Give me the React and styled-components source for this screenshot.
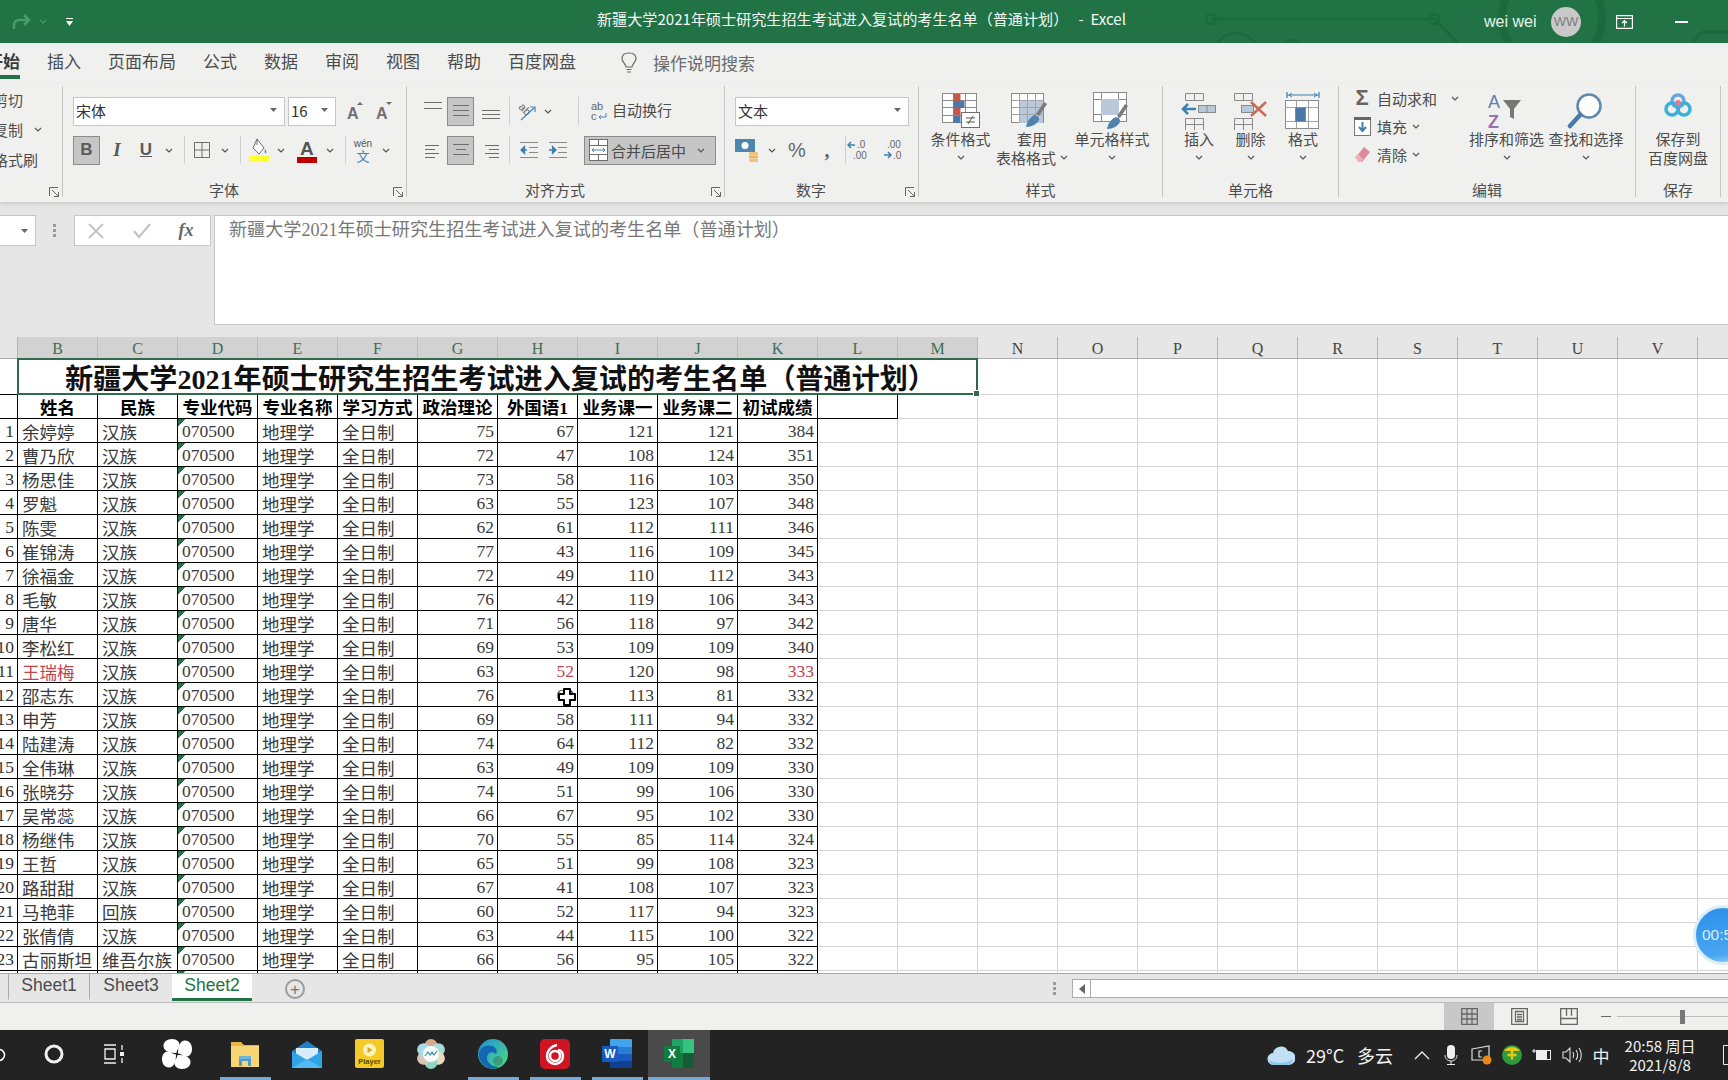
import React from 'react';
import styled, { createGlobalStyle } from 'styled-components';

const SANS = '"Noto Sans CJK SC", "Liberation Sans", sans-serif';
const SHEET = '"Liberation Serif", "Noto Sans CJK SC", serif';

const GlobalStyle = createGlobalStyle`
  html, body { margin: 0; padding: 0; background: #fff; }
  * { box-sizing: border-box; }
`;

const Page = styled.div`
  width: 1728px;
  height: 1080px;
  overflow: hidden;
  display: flex;
  flex-direction: column;
  position: relative;
  font-family: ${SANS};
  color: #444;
`;

/* ---------- title bar ---------- */
const TitleBar = styled.div`
  height: 43px;
  flex: none;
  background: #217346;
  display: flex;
  align-items: center;
  position: relative;
  color: #fff;
`;
const Circuit = styled.svg`
  position: absolute;
  left: 0;
  top: 0;
`;
const Quick = styled.div`
  width: 597px;
  flex: none;
  display: flex;
  align-items: center;
  padding-left: 12px;
  position: relative;
`;
const DocTitle = styled.div`
  font-size: 15.1px;
  white-space: pre;
  position: relative;
  margin-top: -8px;
  color: #f4f8f5;
`;
const TitleRight = styled.div`
  margin-left: auto;
  width: 244px;
  display: flex;
  align-items: center;
  position: relative;
`;
const UserName = styled.div`
  width: 54px;
  font-size: 16px;
  font-family: "Liberation Sans", sans-serif;
  white-space: nowrap;
  color: #e6f3ea;
`;
const Avatar = styled.div`
  width: 30px;
  height: 30px;
  margin-left: 13px;
  border-radius: 50%;
  background: #c9c9c9;
  color: #7c7c7c;
  font: 13px "Liberation Sans", sans-serif;
  display: flex;
  align-items: center;
  justify-content: center;
`;

/* ---------- tabs ---------- */
const TabsRow = styled.div`
  height: 41px;
  flex: none;
  background: #f0f1ef;
  display: flex;
  gap: 27px;
  margin-left: -14px;
`;
const Tab = styled.div`
  height: 36px;
  padding-top: 7px;
  line-height: 22px;
  font-size: 17px;
  white-space: nowrap;
  color: ${p => (p.$active ? '#3a3a3a' : '#4c4c4c')};
  font-weight: ${p => (p.$active ? 700 : 400)};
  border-bottom: 4px solid ${p => (p.$active ? '#217346' : 'transparent')};
`;
const TellMe = styled.div`
  display: flex;
  align-items: center;
  height: 36px;
  padding-top: 3px;
  margin-left: 18px;
  gap: 16px;
  font-size: 17px;
  color: #6a6a6a;
`;

/* ---------- ribbon ---------- */
const Ribbon = styled.div`
  height: 118px;
  flex: none;
  background: #f0f1ef;
  display: flex;
  padding-top: 2px;
  position: relative;
  box-shadow: 0 2px 4px rgba(0, 0, 0, 0.12);
`;
const Group = styled.div`
  width: ${p => p.$w}px;
  height: 111px;
  flex: none;
  display: flex;
  flex-direction: column;
  border-right: 1px solid #c4c4c4;
`;
const GroupBody = styled.div`
  height: 90px;
  flex: none;
  display: flex;
  flex-direction: ${p => (p.$stack ? 'column' : 'row')};
  padding-top: ${p => (p.$stack ? 11 : 0)}px;
  padding-left: ${p => p.$pl || 0}px;
  gap: ${p => (p.$stack ? 11 : 0)}px;
`;
const GroupFoot = styled.div`
  display: grid;
  grid-template-columns: 1fr auto 1fr;
  align-items: center;
  flex: none;
  height: 20px;
  margin-top: 4px;
  font-size: 15px;
  line-height: 20px;
  color: #4c4c4c;
  & > span { grid-column: 2; margin-right: ${p => (p.$shift ? 21 : 0)}px; }
  & > svg { justify-self: end; margin: 4px 3px 0 0; }
`;
const Row = styled.div`
  display: flex;
  align-items: center;
  height: ${p => p.$h || 28}px;
`;
const Slot = styled.div`
  width: ${p => p.$w}px;
  height: 100%;
  flex: none;
  display: flex;
  align-items: center;
  justify-content: center;
`;
const ToggleBtn = styled.div`
  width: 27px;
  height: 29px;
  flex: none;
  background: #c6c6c6;
  border: 1px solid #8c8c8c;
  display: flex;
  align-items: center;
  justify-content: center;
`;
const StyleLetter = styled.span`
  font: ${p => (p.$i ? 'italic 700 19px "Liberation Serif", serif' : '700 17px "Liberation Sans", sans-serif')};
  color: #5a5a5a;
  text-decoration: ${p => (p.$u ? 'underline' : 'none')};
`;
const Sep = styled.div`
  width: 1px;
  height: 28px;
  flex: none;
  background: #cfcfcf;
  margin-left: ${p => p.$l || 0}px;
  margin-right: ${p => p.$r || 0}px;
`;
const Select = styled.div`
  width: ${p => p.$w}px;
  height: 29px;
  flex: none;
  margin-left: ${p => p.$ml || 0}px;
  background: #fff;
  border: 1px solid #c6c6c6;
  display: flex;
  align-items: center;
  justify-content: space-between;
  padding: 0 7px 2px 2px;
  font-size: 15px;
  color: #333;
`;
const RowLabel = styled.span`
  font-size: 15px;
  white-space: nowrap;
  margin-left: ${p => p.$ml || 0}px;
  padding-bottom: 3px;
  color: #4c4c4c;
`;
const MergeBtn = styled.div`
  width: 132px;
  height: 29px;
  flex: none;
  margin-left: 14px;
  background: #c6c6c6;
  border: 1px solid #8c8c8c;
  display: flex;
  align-items: center;
  padding-left: 4px;
  gap: 3px;
  font-size: 15px;
  color: #4a4a4a;
  white-space: nowrap;
  & > svg { flex: none; }
`;
const Clip = styled.div`
  display: flex;
  flex-direction: column;
  margin: -2px 0 0 -7px;
`;
const ClipRow = styled.div`
  height: 30px;
  display: flex;
  align-items: center;
  gap: 11px;
  font-size: 15px;
  white-space: nowrap;
  color: #4c4c4c;
`;
const BigBtn = styled.div`
  width: ${p => p.$w}px;
  flex: none;
  display: flex;
  flex-direction: column;
  align-items: center;
  padding-top: 6px;
  font-size: 15px;
  color: #4c4c4c;
`;
const BigIcon = styled.div`
  height: 37px;
  display: flex;
  align-items: flex-start;
  justify-content: center;
`;
const BigLine = styled.div`
  height: 19px;
  line-height: 19px;
  display: flex;
  align-items: center;
  gap: 4px;
  white-space: nowrap;
`;
const SmallCol = styled.div`
  width: 116px;
  flex: none;
  display: flex;
  flex-direction: column;
  margin-top: -2px;
`;
const SmallRow = styled.div`
  height: 28px;
  display: flex;
  align-items: center;
  gap: 5px;
  font-size: 15px;
  color: #4c4c4c;
  white-space: nowrap;
`;
const SmallIcon = styled.div`
  width: 20px;
  flex: none;
  display: flex;
  justify-content: center;
`;
const WenStack = styled.div`
  display: flex;
  flex-direction: column;
  align-items: center;
  line-height: 10px;
  & > small { font: 10px "Liberation Sans", sans-serif; color: #555; }
  & > b { font-weight: 400; font-size: 13px; line-height: 13px; color: #4b82ad; }
`;
const Mark = styled.span`
  font: ${p => p.$font || '400 20px "Liberation Sans", sans-serif'};
  line-height: 1;
  color: #666;
`;

/* ---------- formula bar ---------- */
const FormulaBar = styled.div`
  height: 135px;
  flex: none;
  background: #e6e6e6;
  display: flex;
  align-items: flex-start;
  padding-top: 13px;
`;
const NameBox = styled.div`
  width: 36px;
  height: 31px;
  flex: none;
  background: #fff;
  border: 1px solid #c6c6c6;
  border-left: 0;
  display: flex;
  align-items: center;
  justify-content: flex-end;
  padding-right: 7px;
`;
const GripSlot = styled.div`
  width: 38px;
  height: 31px;
  flex: none;
  display: flex;
  align-items: center;
  justify-content: center;
`;
const FxBox = styled.div`
  width: 137px;
  height: 31px;
  flex: none;
  background: #fff;
  border: 1px solid #c6c6c6;
  display: flex;
  align-items: center;
`;
const FxMark = styled.span`
  font: italic 700 18px "Liberation Serif", serif;
  color: #666;
`;
const FormulaInput = styled.div`
  flex: 1;
  height: 110px;
  margin-left: 3px;
  background: #fff;
  border: 1px solid #c6c6c6;
  border-right: 0;
  padding: 2px 0 0 14px;
  font-family: ${SHEET};
  font-size: 18.1px;
  line-height: 24px;
  color: #777;
  white-space: nowrap;
`;

/* ---------- sheet ---------- */
const Sheet = styled.div`
  height: 636px;
  flex: none;
  overflow: hidden;
  display: grid;
  grid-template-columns: 18px repeat(22, 80px);
  grid-template-rows: 22px 36px repeat(25, 24px);
  font-family: ${SHEET};
  font-size: 17.5px;
  background: #fff;
`;
const Corner = styled.div`
  background: #e6e6e6;
  border-right: 1px solid #b4b4b4;
  border-bottom: 1px solid #ababab;
`;
const ColHead = styled.div`
  background: ${p => (p.$on ? '#d2d2d2' : '#e6e6e6')};
  color: ${p => (p.$on ? '#3d6e52' : '#444')};
  border-right: 1px solid ${p => (p.$on ? '#bcbcbc' : '#b4b4b4')};
  border-bottom: 1px solid #ababab;
  display: flex;
  align-items: center;
  justify-content: center;
  padding-top: 3px;
  font-size: 16px;
`;
const RowHead = styled.div`
  background: #fff;
  border-right: 1px solid #000;
  border-bottom: 1px solid #000;
  display: flex;
  align-items: center;
  justify-content: flex-end;
  padding: 1px 3px 0 0;
  overflow: hidden;
  white-space: nowrap;
  color: #333;
`;
const Banner = styled.div`
  grid-column: span 12;
  position: relative;
  z-index: 2;
  border: 2px solid #2f6b4a;
  margin-left: -1px;
  margin-top: -1px;
  display: flex;
  align-items: center;
  justify-content: center;
  padding-left: 6px;
  font-size: 28.1px;
  font-weight: 700;
  color: #111;
  white-space: nowrap;
`;
const Handle = styled.span`
  position: absolute;
  right: -4px;
  bottom: -4px;
  width: 7px;
  height: 7px;
  background: #2f6b4a;
  border: 1px solid #fff;
`;
const Blank = styled.div`
  border-right: 1px solid #d4d4d4;
  border-bottom: 1px solid #d4d4d4;
`;
const Head = styled.div`
  border-right: 1px solid #000;
  border-bottom: 1px solid #000;
  display: flex;
  align-items: center;
  justify-content: center;
  font-weight: 700;
  color: #000;
  white-space: nowrap;
  overflow: hidden;
`;
const Cell = styled.div`
  border-right: 1px solid #000;
  border-bottom: 1px solid #000;
  display: flex;
  align-items: center;
  justify-content: ${p => (p.$num ? 'flex-end' : 'flex-start')};
  padding: 1px 3px 0 4px;
  position: relative;
  white-space: nowrap;
  overflow: hidden;
  color: ${p => (p.$red ? '#c0444b' : '#3a3a3a')};
  background: ${p => (p.$tick ? 'linear-gradient(135deg, #217346 5px, transparent 5px)' : 'none')};
`;
const CrossCursor = styled.svg`
  position: absolute;
  left: 60px;
  top: 5px;
`;
const Timer = styled.div`
  position: absolute;
  left: 1693px;
  top: 905px;
  width: 60px;
  height: 60px;
  border-radius: 50%;
  border: 3px solid #dcedf3;
  background: linear-gradient(170deg, #2b8fe9, #4aa6f2 80%, #9ad2f7);
  color: #d8effc;
  font: 15.5px "Liberation Sans", sans-serif;
  display: flex;
  align-items: center;
  padding-left: 6px;
  white-space: nowrap;
  overflow: hidden;
`;

/* ---------- sheet tabs + status ---------- */
const SheetBar = styled.div`
  height: 30px;
  flex: none;
  background: #e6e6e6;
  display: flex;
  border-top: 1px solid #a9a9a9;
  border-bottom: 1px solid #bdbdbd;
  padding-left: 8px;
  font-family: "Liberation Sans", sans-serif;
`;
const SheetTab = styled.div`
  width: ${p => p.$w}px;
  height: 27px;
  flex: none;
  display: flex;
  align-items: center;
  justify-content: center;
  font-size: 17.5px;
  padding-bottom: 2px;
  color: ${p => (p.$active ? '#217346' : '#4c4c4c')};
  background: ${p => (p.$active ? '#fff' : 'transparent')};
  border-bottom: 3px solid ${p => (p.$active ? '#217346' : 'transparent')};
  border-left: ${p => (p.$active ? '0' : '1px solid #ababab')};
`;
const AddSheet = styled.div`
  width: 20px;
  height: 20px;
  margin: 5px 0 0 33px;
  border-radius: 50%;
  border: 2px solid #9a9a9a;
  color: #777;
  display: flex;
  align-items: center;
  justify-content: center;
  font-size: 17px;
  line-height: 1;
`;
const Fill = styled.div`
  flex: 1;
`;
const ScrollArea = styled.div`
  width: 678px;
  flex: none;
  display: flex;
  align-items: flex-start;
  padding-top: 5px;
`;
const ScrollGrip = styled.div`
  width: 22px;
  height: 19px;
  flex: none;
  display: flex;
  align-items: center;
  padding-left: 3px;
`;
const ScrollArrow = styled.div`
  width: 19px;
  height: 19px;
  flex: none;
  background: #fff;
  border: 1px solid #ababab;
  display: flex;
  align-items: center;
  justify-content: center;
`;
const ScrollTrack = styled.div`
  flex: 1;
  height: 19px;
  background: #fff;
  border: 1px solid #ababab;
  border-left: 0;
  border-right: 0;
`;
const StatusBar = styled.div`
  height: 27px;
  flex: none;
  background: #f0f1ef;
  display: flex;
`;
const ViewBtn = styled.div`
  width: 50px;
  flex: none;
  display: flex;
  align-items: center;
  justify-content: center;
  background: ${p => (p.$active ? '#c8c8c8' : 'transparent')};
`;
const ZoomBar = styled.div`
  width: 134px;
  flex: none;
  display: flex;
  align-items: center;
  padding-left: 7px;
`;
const ZoomMinus = styled.div`
  width: 10px;
  height: 1px;
  flex: none;
  margin-right: 6px;
  background: #666;
`;
const ZoomLine = styled.div`
  height: 1px;
  background: #bbb;
  flex: ${p => (p.$w ? `0 0 ${p.$w}px` : 1)};
`;
const ZoomThumb = styled.div`
  width: 5px;
  height: 14px;
  flex: none;
  background: #777;
`;

/* ---------- taskbar ---------- */
const Taskbar = styled.div`
  height: 50px;
  flex: none;
  background: #232323;
  display: flex;
  color: #fff;
`;
const StartClip = styled.div`
  width: 24px;
  flex: none;
  display: flex;
  align-items: center;
  margin-left: -8px;
  margin-right: 8px;
`;
const TaskItem = styled.div`
  width: ${p => p.$w || 62}px;
  margin-left: ${p => p.$ml || 0}px;
  flex: none;
  display: flex;
  flex-direction: column;
  align-items: center;
  background: ${p => (p.$active ? '#4a4a4a' : 'transparent')};
`;
const TaskIcon = styled.div`
  height: 47px;
  display: flex;
  align-items: center;
  justify-content: center;
`;
const TaskMark = styled.div`
  height: 3px;
  width: ${p => (p.$full ? '100%' : '51px')};
  background: ${p => (p.$on ? '#76a9d6' : 'transparent')};
`;
const Tray = styled.div`
  width: 466px;
  flex: none;
  display: flex;
  align-items: center;
`;
const TrayText = styled.div`
  width: ${p => p.$w}px;
  margin-left: ${p => p.$ml || 0}px;
  flex: none;
  font-size: ${p => p.$size || 18}px;
  text-align: ${p => (p.$center ? 'center' : 'left')};
  white-space: nowrap;
  color: #f2f2f2;
`;
const TraySlot = styled.div`
  width: ${p => p.$w}px;
  margin-left: ${p => p.$ml || 0}px;
  flex: none;
  display: flex;
  align-items: center;
  justify-content: center;
`;
const Clock = styled.div`
  width: 76px;
  margin-left: 7px;
  flex: none;
  text-align: center;
  font-size: 15px;
  line-height: 19px;
  white-space: nowrap;
  color: #f2f2f2;
`;

/* ---------- icons ---------- */
const Chev = ({ c = '#555' }) => (
  <svg width="8" height="5" viewBox="0 0 8 5"><polyline points="1,1 4,4 7,1" fill="none" stroke={c} strokeWidth="1.2" /></svg>
);
const Caret = () => (
  <svg width="7" height="4" viewBox="0 0 7 4"><path d="M0 0h7L3.5 4z" fill="#666" /></svg>
);
const Launcher = () => (
  <svg width="10" height="10" viewBox="0 0 10 10" fill="none" stroke="#666"><path d="M0.5 9V0.5H9M3 3l6 6M5 9.5h4.5V5" /></svg>
);
const Lines = ({ rows, w = 18, h = 18 }) => (
  <svg width={w} height={h} viewBox={`0 0 ${w} ${h}`} stroke="#6e6e6e">
    {rows.map(([a, b, y]) => <line key={y} x1={a} x2={b} y1={y + 0.5} y2={y + 0.5} />)}
  </svg>
);
const Grow = ({ up }) => (
  <svg width="18" height="20" viewBox="0 0 18 20">
    <text x="0" y="18" fontFamily="Liberation Sans" fontSize="16" fontWeight="700" fill="#707070">A</text>
    <path d={up ? 'M10 4l3-3 3 3z' : 'M10 1h6l-3 3z'} fill="#6a6a6a" />
  </svg>
);
const BordersIcon = () => (
  <svg width="18" height="18" viewBox="0 0 18 18" fill="none" stroke="#6e6e6e"><path d="M1.5 1.5h15v15h-15zM9 1.5v15M1.5 9h15" /></svg>
);
const FillIcon = () => (
  <svg width="20" height="24" viewBox="0 0 20 24">
    <path d="M8 1l7 9-5 6-6-6z" fill="#fff" stroke="#6e6e6e" />
    <path d="M8 1v6" stroke="#6e6e6e" />
    <path d="M16 11c1.5 2 2 3 1 4s-2 0-1-4z" fill="#5a8db5" />
    <rect x="0" y="18" width="20" height="6" fill="#ffff33" />
  </svg>
);
const ColorIcon = () => (
  <svg width="20" height="25" viewBox="0 0 20 25">
    <text x="3" y="17" fontFamily="Liberation Sans" fontSize="19" fontWeight="700" fill="#555">A</text>
    <rect y="19" width="20" height="6" fill="#c00000" />
  </svg>
);
const OrientIcon = () => (
  <svg width="22" height="22" viewBox="0 0 22 22">
    <text x="2" y="13" fontFamily="Liberation Sans" fontSize="11" fill="#666" transform="rotate(45 8 9)">ab</text>
    <path d="M4 20L17 8M13 7h5v5" fill="none" stroke="#4b82ad" strokeWidth="1.2" />
  </svg>
);
const WrapIcon = () => (
  <svg width="18" height="20" viewBox="0 0 18 20">
    <text x="1" y="9" fontFamily="Liberation Sans" fontSize="11" fill="#666">ab</text>
    <text x="1" y="19" fontFamily="Liberation Sans" fontSize="11" fill="#666">c</text>
    <path d="M16 12v4h-7M11 14l-2 2 2 2" fill="none" stroke="#4b82ad" />
  </svg>
);
const MergeIcon = () => (
  <svg width="19" height="22" viewBox="0 0 19 22" fill="none" stroke="#6e6e6e">
    <rect x="0.5" y="0.5" width="18" height="21" fill="#fff" />
    <path d="M0.5 6.5h18M0.5 15.5h18M9.5 0.5v6M9.5 15.5v6" />
    <path d="M3 11h13M5 9l-2 2 2 2M14 9l2 2-2 2" stroke="#4b82ad" />
  </svg>
);
const IndentIcon = ({ inc }) => (
  <svg width="20" height="18" viewBox="0 0 20 18" stroke="#8a8a8a">
    <path d="M1 1.5h18M10 6.5h9M10 11.5h9M1 16.5h18" />
    <path d={inc ? 'M1 9h6M4.5 5.5L8 9l-3.5 3.5z' : 'M8 9H2M5.5 5.5L2 9l3.5 3.5z'} stroke="#3c7fb1" fill="#3c7fb1" strokeWidth="1.3" />
  </svg>
);
const CurrencyIcon = () => (
  <svg width="24" height="24" viewBox="0 0 24 24">
    <rect x="0" y="1" width="20" height="13" fill="#4e87ad" />
    <circle cx="10" cy="7.5" r="3.5" fill="#fff" />
    <rect x="14" y="14" width="9" height="3" rx="1" fill="#eec27a" />
    <rect x="14" y="17.5" width="9" height="3" rx="1" fill="#e8b25e" />
    <rect x="14" y="21" width="9" height="3" rx="1" fill="#eec27a" />
  </svg>
);
const DecimalIcon = ({ inc }) => (
  <svg width="24" height="22" viewBox="0 0 24 22" fontFamily="Liberation Sans" fontSize="10" fill="#666">
    {inc ? (
      <>
        <path d="M8 6H1M4 3L1 6l3 3" fill="none" stroke="#3c7fb1" strokeWidth="1.5" />
        <text x="10" y="9">.0</text>
        <text x="6" y="20">.00</text>
      </>
    ) : (
      <>
        <text x="5" y="9">.00</text>
        <path d="M2 16h7M6 13l3 3-3 3" fill="none" stroke="#3c7fb1" strokeWidth="1.5" />
        <text x="11" y="20">.0</text>
      </>
    )}
  </svg>
);
const Brush = ({ dx = 0, dy = 0 }) => (
  <g transform={`translate(${dx} ${dy})`}>
    <path d="M14 18l8-12 3 2-8 12z" fill="#7b7b7b" />
    <path d="M4 31c1-6 5-11 9-12 3 1 5 3 4 5-2 4-7 7-13 7z" fill="#4f82ad" />
  </g>
);
const CondIcon = () => (
  <svg width="42" height="36" viewBox="0 0 42 36">
    <g fill="none" stroke="#8a8a8a">
      <rect x="2.5" y="1.5" width="34" height="29" fill="#fff" />
      <path d="M2.5 8.5h34M2.5 15.5h34M2.5 23.5h34M13.5 1.5v29M25.5 1.5v29" />
    </g>
    <rect x="13.5" y="2" width="7" height="7" fill="#c0594a" />
    <rect x="13.5" y="9" width="11" height="7" fill="#4a78a8" />
    <rect x="13.5" y="16" width="7" height="7" fill="#c0594a" />
    <rect x="13.5" y="24" width="7" height="7" fill="#4a78a8" />
    <rect x="21.5" y="20.5" width="18" height="15" fill="#fff" stroke="#6e6e6e" />
    <path d="M26 26h9M26 30h9M33 24l-5 8" stroke="#555" fill="none" />
  </svg>
);
const TableFmtIcon = () => (
  <svg width="46" height="38" viewBox="0 0 46 38">
    <rect x="2.5" y="1.5" width="32" height="29" fill="#fff" stroke="#8a8a8a" />
    <rect x="10" y="8" width="24" height="23" fill="#b9c9da" />
    <path d="M2.5 8.5h32M2.5 15.5h32M2.5 22.5h32M10.5 1.5v29M18.5 1.5v29M26.5 1.5v29" stroke="#a3a3a3" fill="none" />
    <Brush dx="13" dy="4" />
  </svg>
);
const CellFmtIcon = () => (
  <svg width="46" height="40" viewBox="0 0 46 40">
    <rect x="4.5" y="0.5" width="33" height="29" fill="#fff" stroke="#8a8a8a" />
    <path d="M4.5 7.5h8M29.5 7.5h8M4.5 22.5h8M29.5 22.5h8M12.5 .5v7M29.5 .5v7M12.5 22.5v7M29.5 22.5v7" stroke="#8a8a8a" />
    <rect x="12" y="7" width="18" height="16" fill="#b9c9da" />
    <Brush dx="14" dy="6" />
  </svg>
);
const InsertIcon = () => (
  <svg width="38" height="38" viewBox="0 0 38 38" fill="none" stroke="#8a8a8a">
    <path d="M5.5 1.5h18v7h-18zM14.5 1.5v7M5.5 26.5h18v12h-18zM14.5 26.5v12M5.5 32.5h18" />
    <rect x="18.5" y="13.5" width="17" height="7" fill="#b9c9da" />
    <path d="M27 13.5v7" />
    <path d="M16 17H3M8 12l-5 5 5 5" stroke="#3c7fb1" strokeWidth="2.5" />
  </svg>
);
const DeleteIcon = () => (
  <svg width="38" height="38" viewBox="0 0 38 38" fill="none" stroke="#8a8a8a">
    <path d="M2.5 1.5h18v7h-18zM11.5 1.5v7M2.5 26.5h18v12h-18zM11.5 26.5v12M2.5 32.5h18" />
    <rect x="9.5" y="13.5" width="12" height="7" fill="#b9c9da" />
    <path d="M19 10l15 14M34 10L19 24" stroke="#cc6a55" strokeWidth="2.5" />
  </svg>
);
const FormatIcon = () => (
  <svg width="38" height="38" viewBox="0 0 38 38" fill="none" stroke="#8a8a8a">
    <path d="M3 3h32M3 0v6M35 0v6" stroke="#3c7fb1" strokeWidth="1.2" />
    <path d="M8 1L5 3l3 2M30 1l3 2-3 2" stroke="#3c7fb1" />
    <rect x="1.5" y="8.5" width="33" height="28" fill="#fff" />
    <path d="M1.5 15.5h33M1.5 29.5h33M12.5 8.5v28M24.5 8.5v28" stroke="#a3a3a3" />
    <rect x="11.5" y="15.5" width="10" height="14" fill="#4a78a8" />
  </svg>
);
const FillDown = () => (
  <svg width="17" height="19" viewBox="0 0 17 19">
    <rect x="0.5" y="0.5" width="16" height="18" fill="#fff" stroke="#777" />
    <rect x="0" y="0" width="17" height="3" fill="#666" />
    <path d="M8.5 5v9M5 10l3.5 4 3.5-4" fill="none" stroke="#3c7fb1" strokeWidth="2" />
  </svg>
);
const Eraser = () => (
  <svg width="17" height="17" viewBox="0 0 17 17">
    <path d="M10 1l6 5-8 10-6-5z" fill="#dd8b99" />
    <path d="M1 11l3-3 5 5-2 3H4z" fill="#e9b1bb" />
  </svg>
);
const SortIcon = () => (
  <svg width="42" height="38" viewBox="0 0 42 38">
    <text x="2" y="16" fontFamily="Liberation Sans" fontSize="18" fill="#5a7fb0">A</text>
    <text x="2" y="36" fontFamily="Liberation Sans" fontSize="18" fontWeight="700" fill="#9c6fae">Z</text>
    <path d="M17 8h18l-7 9v10l-4-2v-8z" fill="#777" />
  </svg>
);
const FindIcon = () => (
  <svg width="38" height="38" viewBox="0 0 38 38">
    <circle cx="22" cy="14" r="11.5" fill="#fdfdfd" stroke="#5d88ab" strokeWidth="2.5" />
    <path d="M13 23L3 34" stroke="#4a78a8" strokeWidth="4.5" strokeLinecap="round" />
  </svg>
);
const BaiduIcon = () => (
  <svg width="28" height="26" viewBox="0 0 28 26" fill="none" strokeWidth="3.5">
    <circle cx="14" cy="9" r="6" stroke="#6aa6dc" />
    <circle cx="8" cy="17" r="6" stroke="#3bb0d9" />
    <circle cx="20" cy="17" r="6" stroke="#3bb0d9" />
    <circle cx="14" cy="11" r="3" fill="#dd7d92" stroke="none" />
  </svg>
);
const ViewGrid = () => (
  <svg width="17" height="17" viewBox="0 0 17 17" fill="none" stroke="#666" strokeWidth="1.3"><path d="M.7.7h15.6v15.6H.7zM6 .7v15.6M11 .7v15.6M.7 6h15.6M.7 11h15.6" /></svg>
);
const ViewPage = () => (
  <svg width="17" height="17" viewBox="0 0 17 17" fill="none" stroke="#666" strokeWidth="1.3"><path d="M.7.7h15.6v15.6H.7zM4.5 3.5h8v10h-8zM6 6.5h5M6 9h5M6 11.5h5" /></svg>
);
const ViewBreak = () => (
  <svg width="18" height="17" viewBox="0 0 18 17" fill="none" stroke="#666" strokeWidth="1.3"><path d="M.7.7h16.6v15.6H.7zM.7 10.5h16.6M6.5.7v7M11.5.7v7" /></svg>
);

const FanIcon = () => (
  <svg width="30" height="30" viewBox="0 0 30 30" fill="#fff">
    {[0, 90, 180, 270].map(a => (
      <path key={a} transform={`rotate(${a} 15 15)`} d="M14.5 14C9 14 2 13 1.5 7.5 1 3 5 0 10 0c5 0 8 3 7.5 7-.3 2.500-2.500 3-3 7z" />
    ))}
  </svg>
);
const FolderIcon = () => (
  <svg width="30" height="26" viewBox="0 0 30 26">
    <path d="M1 1h10l3 3h15v22H1z" fill="#e8b445" />
    <rect x="1" y="5" width="28" height="21" fill="#f7d774" />
    <path d="M9 25v-9h12v9h-3v-5h-6v5z" fill="#4f9ac9" />
    <rect x="9" y="15" width="12" height="3" fill="#6fb4dd" />
  </svg>
);
const MailIcon = () => (
  <svg width="32" height="28" viewBox="0 0 32 28">
    <path d="M1 11L16 1l15 10v17H1z" fill="#1f7fc9" />
    <path d="M5 8h22v7l-11 6-11-6z" fill="#d6eefa" />
    <path d="M1 11l15 9 15-9v17H1z" fill="#2fa4e7" />
    <path d="M1 28l15-9 15 9z" fill="#55baf0" />
  </svg>
);
const PlayerIcon = () => (
  <svg width="29" height="29" viewBox="0 0 29 29">
    <rect width="29" height="29" rx="2" fill="#f5c928" />
    <circle cx="14.5" cy="11" r="6.5" fill="#fff3c0" />
    <path d="M12.5 8l5 3-5 3z" fill="#d9a516" />
    <text x="14.5" y="25" textAnchor="middle" fontFamily="Liberation Sans" fontSize="7.5" fontWeight="700" fill="#5c4a00">Player</text>
  </svg>
);
const FlowerIcon = () => (
  <svg width="30" height="30" viewBox="0 0 30 30">
    {[['#d9a98c', 0], ['#a8dcd8', 60], ['#e8d9c0', 120], ['#8fd6c4', 180], ['#d7c5b5', 240], ['#a9d8e6', 300]].map(([c, a]) => (
      <ellipse key={a} cx="15" cy="7" rx="6.5" ry="7" fill={c} transform={`rotate(${a} 15 15)`} />
    ))}
    <circle cx="15" cy="15" r="8" fill="#f5fbf9" />
    <path d="M9 17l3-4 2 3 2-3 2 3 3-4" fill="none" stroke="#3b8fb0" strokeWidth="1.2" />
  </svg>
);
const EdgeIcon = () => (
  <svg width="30" height="30" viewBox="0 0 30 30">
    <defs>
      <linearGradient id="edgeA" x1="0" y1="0" x2="1" y2="1"><stop offset="0" stopColor="#1d8fd6" /><stop offset="1" stopColor="#50e07f" /></linearGradient>
    </defs>
    <circle cx="15" cy="15" r="15" fill="url(#edgeA)" />
    <path d="M1 14c1-6 8-9 13-7 4 1 6 5 4 8-3-3-9-2-9 4 0 5 6 9 12 9-3 2-7 2-10 1C5 27 0 21 1 14z" fill="#1565b5" />
    <circle cx="20" cy="22" r="5" fill="#232323" opacity="0.25" />
  </svg>
);
const NeteaseIcon = () => (
  <svg width="30" height="30" viewBox="0 0 30 30" fill="none">
    <rect width="30" height="30" rx="5" fill="#cf1424" />
    <circle cx="15" cy="17" r="5" stroke="#fff" strokeWidth="2.5" />
    <path d="M17 6c-6 1-10 6-10 11 0 5 4 8 8 8s8-3 8-8c0-3-2-6-5-6" stroke="#fff" strokeWidth="2.5" />
  </svg>
);
const WordIcon = () => (
  <svg width="30" height="29" viewBox="0 0 30 29">
    <rect x="8" y="0" width="22" height="29" rx="1" fill="#41a5ee" />
    <rect x="8" y="8" width="22" height="7" fill="#2b7cd3" />
    <rect x="8" y="15" width="22" height="7" fill="#185abd" />
    <rect x="8" y="22" width="22" height="7" fill="#103f91" />
    <rect x="0" y="7" width="16" height="16" rx="1" fill="#185abd" />
    <text x="8" y="19" textAnchor="middle" fontFamily="Liberation Sans" fontSize="12" fontWeight="700" fill="#fff">W</text>
  </svg>
);
const ExcelIcon = () => (
  <svg width="30" height="29" viewBox="0 0 30 29">
    <rect x="8" y="0" width="22" height="29" rx="1" fill="#21a366" />
    <rect x="19" y="0" width="11" height="14" fill="#33c481" />
    <rect x="8" y="14" width="11" height="15" fill="#107c41" />
    <rect x="19" y="14" width="11" height="15" fill="#185c37" />
    <rect x="0" y="7" width="16" height="16" rx="1" fill="#107c41" />
    <text x="8" y="19" textAnchor="middle" fontFamily="Liberation Sans" fontSize="12" fontWeight="700" fill="#fff">X</text>
  </svg>
);

/* ---------- data ---------- */
const HEADS = ['姓名', '民族', '专业代码', '专业名称', '学习方式', '政治理论', '外国语1', '业务课一', '业务课二', '初试成绩'];
const STUDENTS = [
  ['余婷婷', '汉族', 75, 67, 121, 121, 384],
  ['曹乃欣', '汉族', 72, 47, 108, 124, 351],
  ['杨思佳', '汉族', 73, 58, 116, 103, 350],
  ['罗魁', '汉族', 63, 55, 123, 107, 348],
  ['陈雯', '汉族', 62, 61, 112, 111, 346],
  ['崔锦涛', '汉族', 77, 43, 116, 109, 345],
  ['徐福金', '汉族', 72, 49, 110, 112, 343],
  ['毛敏', '汉族', 76, 42, 119, 106, 343],
  ['唐华', '汉族', 71, 56, 118, 97, 342],
  ['李松红', '汉族', 69, 53, 109, 109, 340],
  ['王瑞梅', '汉族', 63, 52, 120, 98, 333],
  ['邵志东', '汉族', 76, 62, 113, 81, 332],
  ['申芳', '汉族', 69, 58, 111, 94, 332],
  ['陆建涛', '汉族', 74, 64, 112, 82, 332],
  ['全伟琳', '汉族', 63, 49, 109, 109, 330],
  ['张晓芬', '汉族', 74, 51, 99, 106, 330],
  ['吴常蕊', '汉族', 66, 67, 95, 102, 330],
  ['杨继伟', '汉族', 70, 55, 85, 114, 324],
  ['王哲', '汉族', 65, 51, 99, 108, 323],
  ['路甜甜', '汉族', 67, 41, 108, 107, 323],
  ['马艳菲', '回族', 60, 52, 117, 94, 323],
  ['张倩倩', '汉族', 63, 44, 115, 100, 322],
  ['古丽斯坦', '维吾尔族', 66, 56, 95, 105, 322],
];
const LETTERS = 'BCDEFGHIJKLMNOPQRSTUVW'.split('');
const TITLE = '新疆大学2021年硕士研究生招生考试进入复试的考生名单（普通计划）';
const blanks = (n, key) => Array.from({ length: n }, (_, i) => <Blank key={`${key}-${i}`} />);

function SheetGrid() {
  return (
    <Sheet>
      <Corner />
      {LETTERS.map((l, i) => <ColHead key={l} $on={i < 12}>{l}</ColHead>)}

      <RowHead />
      <Banner>{TITLE}<Handle /></Banner>
      {blanks(10, 'title')}

      <RowHead />
      {HEADS.map(h => <Head key={h}>{h}</Head>)}
      <Head />
      {blanks(11, 'head')}

      {STUDENTS.map((s, i) => {
        const red = i === 10;
        return (
          <React.Fragment key={s[0]}>
            <RowHead>{i + 1}</RowHead>
            <Cell $red={red}>{s[0]}</Cell>
            <Cell>{s[1]}</Cell>
            <Cell $tick>070500</Cell>
            <Cell>地理学</Cell>
            <Cell>全日制</Cell>
            <Cell $num>{s[2]}</Cell>
            <Cell $num $red={red}>
              {s[3]}
              {i === 11 && (
                <CrossCursor width="18" height="18" viewBox="0 0 18 18">
                  <path d="M6 1h6v5h5v6h-5v5H6v-5H1V6h5z" fill="#fff" stroke="#000" strokeWidth="2" strokeLinejoin="round" />
                </CrossCursor>
              )}
            </Cell>
            <Cell $num>{s[4]}</Cell>
            <Cell $num>{s[5]}</Cell>
            <Cell $num $red={red}>{s[6]}</Cell>
            {blanks(12, `r${i}`)}
          </React.Fragment>
        );
      })}

      <RowHead />
      {Array.from({ length: 10 }, (_, i) => <Cell key={i} $tick={i === 2} />)}
      {blanks(12, 'last')}
    </Sheet>
  );
}

function RibbonBar() {
  return (
    <Ribbon>
      <Group $w={63}>
        <GroupBody>
          <Clip>
            <ClipRow>剪切</ClipRow>
            <ClipRow>复制<Chev /></ClipRow>
            <ClipRow>格式刷</ClipRow>
          </Clip>
        </GroupBody>
        <GroupFoot><span /><Launcher /></GroupFoot>
      </Group>

      <Group $w={344}>
        <GroupBody $stack $pl={10}>
          <Row>
            <Select $w={212}>宋体<Caret /></Select>
            <Select $w={48} $ml={3}>16<Caret /></Select>
            <Slot $w={40}><Grow up /></Slot>
            <Slot $w={18}><Grow /></Slot>
          </Row>
          <Row>
            <ToggleBtn><StyleLetter>B</StyleLetter></ToggleBtn>
            <Slot $w={34}><StyleLetter $i>I</StyleLetter></Slot>
            <Slot $w={24}><StyleLetter $u>U</StyleLetter></Slot>
            <Slot $w={22}><Chev /></Slot>
            <Sep $l={4} $r={3} />
            <Slot $w={28}><BordersIcon /></Slot>
            <Slot $w={18}><Chev /></Slot>
            <Sep $l={6} $r={5} />
            <Slot $w={26}><FillIcon /></Slot>
            <Slot $w={18}><Chev /></Slot>
            <Slot $w={34}><ColorIcon /></Slot>
            <Slot $w={12}><Chev /></Slot>
            <Sep $l={9} $r={8} />
            <Slot $w={18}><WenStack><small>wén</small><b>文</b></WenStack></Slot>
            <Slot $w={28}><Chev /></Slot>
          </Row>
        </GroupBody>
        <GroupFoot $shift><span>字体</span><Launcher /></GroupFoot>
      </Group>

      <Group $w={318}>
        <GroupBody $stack $pl={11}>
          <Row>
            <Slot $w={29}><Lines rows={[[0, 18, 0], [0, 18, 6]]} /></Slot>
            <ToggleBtn><Lines rows={[[1, 17, 3], [1, 17, 8], [1, 17, 13]]} /></ToggleBtn>
            <Slot $w={33}><Lines rows={[[0, 18, 8], [0, 18, 12], [0, 18, 16]]} /></Slot>
            <Sep $l={2} $r={2} />
            <Slot $w={32}><OrientIcon /></Slot>
            <Slot $w={8}><Chev /></Slot>
            <Sep $l={26} $r={8} />
            <Slot $w={24}><WrapIcon /></Slot>
            <RowLabel $ml={1}>自动换行</RowLabel>
          </Row>
          <Row>
            <Slot $w={29}><Lines rows={[[1, 15, 4], [1, 11, 8], [1, 15, 12], [1, 11, 16]]} /></Slot>
            <ToggleBtn><Lines rows={[[1, 17, 3], [4, 14, 8], [1, 17, 13]]} /></ToggleBtn>
            <Slot $w={33}><Lines rows={[[3, 17, 4], [7, 17, 8], [3, 17, 12], [7, 17, 16]]} /></Slot>
            <Sep $l={2} $r={2} />
            <Slot $w={34}><IndentIcon /></Slot>
            <Slot $w={24}><IndentIcon inc /></Slot>
            <MergeBtn><MergeIcon />合并后居中<Slot $w={24}><Chev /></Slot></MergeBtn>
          </Row>
        </GroupBody>
        <GroupFoot $shift><span>对齐方式</span><Launcher /></GroupFoot>
      </Group>

      <Group $w={194}>
        <GroupBody $stack $pl={10}>
          <Row><Select $w={174}>文本<Caret /></Select></Row>
          <Row>
            <Slot $w={24}><CurrencyIcon /></Slot>
            <Slot $w={26}><Chev /></Slot>
            <Slot $w={24}><Mark>%</Mark></Slot>
            <Slot $w={36}><Mark $font='700 20px "Liberation Serif", serif'>,</Mark></Slot>
            <Sep />
            <Slot $w={26}><DecimalIcon inc /></Slot>
            <Slot $w={44}><DecimalIcon /></Slot>
          </Row>
        </GroupBody>
        <GroupFoot $shift><span>数字</span><Launcher /></GroupFoot>
      </Group>

      <Group $w={244}>
        <GroupBody>
          <BigBtn $w={83}>
            <BigIcon><CondIcon /></BigIcon>
            <BigLine>条件格式</BigLine>
            <BigLine><Chev /></BigLine>
          </BigBtn>
          <BigBtn $w={60}>
            <BigIcon><TableFmtIcon /></BigIcon>
            <BigLine>套用</BigLine>
            <BigLine>表格格式<Chev /></BigLine>
          </BigBtn>
          <BigBtn $w={100}>
            <BigIcon><CellFmtIcon /></BigIcon>
            <BigLine>单元格样式</BigLine>
            <BigLine><Chev /></BigLine>
          </BigBtn>
        </GroupBody>
        <GroupFoot><span>样式</span></GroupFoot>
      </Group>

      <Group $w={176}>
        <GroupBody $pl={10}>
          <BigBtn $w={52}>
            <BigIcon><InsertIcon /></BigIcon>
            <BigLine>插入</BigLine>
            <BigLine><Chev /></BigLine>
          </BigBtn>
          <BigBtn $w={51}>
            <BigIcon><DeleteIcon /></BigIcon>
            <BigLine>删除</BigLine>
            <BigLine><Chev /></BigLine>
          </BigBtn>
          <BigBtn $w={54}>
            <BigIcon><FormatIcon /></BigIcon>
            <BigLine>格式</BigLine>
            <BigLine><Chev /></BigLine>
          </BigBtn>
        </GroupBody>
        <GroupFoot><span>单元格</span></GroupFoot>
      </Group>

      <Group $w={297}>
        <GroupBody $pl={13}>
          <SmallCol>
            <SmallRow>
              <SmallIcon><Mark $font='700 22px "Liberation Sans", sans-serif'>Σ</Mark></SmallIcon>
              自动求和
              <Slot $w={26}><Chev /></Slot>
            </SmallRow>
            <SmallRow><SmallIcon><FillDown /></SmallIcon>填充<Chev /></SmallRow>
            <SmallRow><SmallIcon><Eraser /></SmallIcon>清除<Chev /></SmallRow>
          </SmallCol>
          <BigBtn $w={77}>
            <BigIcon><SortIcon /></BigIcon>
            <BigLine>排序和筛选</BigLine>
            <BigLine><Chev /></BigLine>
          </BigBtn>
          <BigBtn $w={82}>
            <BigIcon><FindIcon /></BigIcon>
            <BigLine>查找和选择</BigLine>
            <BigLine><Chev /></BigLine>
          </BigBtn>
        </GroupBody>
        <GroupFoot><span>编辑</span></GroupFoot>
      </Group>

      <Group $w={85}>
        <GroupBody>
          <BigBtn $w={84}>
            <BigIcon><BaiduIcon /></BigIcon>
            <BigLine>保存到</BigLine>
            <BigLine>百度网盘</BigLine>
          </BigBtn>
        </GroupBody>
        <GroupFoot><span>保存</span></GroupFoot>
      </Group>
    </Ribbon>
  );
}

export default function App() {
  return (
    <Page>
      <GlobalStyle />
      <TitleBar>
        <Circuit width="1728" height="43" viewBox="0 0 1728 43" fill="none" stroke="#1b6a3e" strokeWidth="2.5">
          <path d="M1211 19h223l24 24M1692 43l10-11h26" />
          <circle cx="1211" cy="19" r="5" />
          <circle cx="1434" cy="19" r="5" />
          <circle cx="1236" cy="55" r="22" />
          <circle cx="1292" cy="48" r="8" />
          <circle cx="1552" cy="18" r="50" strokeWidth="8" />
        </Circuit>
        <Quick>
          <svg width="20" height="16" viewBox="0 0 20 16" fill="none" stroke="#4a9a70" strokeWidth="2.5"><path d="M2 15V11c0-3 2-5 5-5h9M12 1l5 5-5 5" /></svg>
          <Slot $w={21}><Chev c="#4a9a70" /></Slot>
          <Slot $w={32}>
            <svg width="7" height="8" viewBox="0 0 7 8" fill="#fff"><rect width="7" height="1" /><path d="M0 3h7L3.5 8z" /></svg>
          </Slot>
        </Quick>
        <DocTitle>{TITLE}{'   -  Excel'}</DocTitle>
        <TitleRight>
          <UserName>wei wei</UserName>
          <Avatar>WW</Avatar>
          <Slot $w={86}>
            <svg width="17" height="14" viewBox="0 0 17 14" fill="none" stroke="#fff" strokeWidth="1.2"><path d="M.6.6h15.8v12.8H.6zM.6 3.5h15.8M8.5 11.5V6M6 8l2.5-2.5L11 8" /></svg>
          </Slot>
          <Slot $w={28}>
            <svg width="13" height="2" viewBox="0 0 13 2"><rect width="13" height="2" fill="#fff" /></svg>
          </Slot>
        </TitleRight>
      </TitleBar>

      <TabsRow>
        <Tab $active>开始</Tab>
        <Tab>插入</Tab>
        <Tab>页面布局</Tab>
        <Tab>公式</Tab>
        <Tab>数据</Tab>
        <Tab>审阅</Tab>
        <Tab>视图</Tab>
        <Tab>帮助</Tab>
        <Tab>百度网盘</Tab>
        <TellMe>
          <svg width="16" height="22" viewBox="0 0 16 22" fill="none" stroke="#666" strokeWidth="1.2">
            <path d="M5 15c0-3-4-5-4-8.5C1 3 4 1 8 1s7 2 7 5.5C15 10 11 12 11 15zM5.5 17.5h5M6 20h4" />
          </svg>
          操作说明搜索
        </TellMe>
      </TabsRow>

      <RibbonBar />

      <FormulaBar>
        <NameBox><Caret /></NameBox>
        <GripSlot>
          <svg width="4" height="14" viewBox="0 0 4 14" fill="#9a9a9a"><rect width="3" height="3" /><rect y="5" width="3" height="3" /><rect y="10" width="3" height="3" /></svg>
        </GripSlot>
        <FxBox>
          <Slot $w={42}>
            <svg width="16" height="16" viewBox="0 0 16 16" stroke="#c4c4c4" strokeWidth="2"><path d="M1 1l14 14M15 1L1 15" /></svg>
          </Slot>
          <Slot $w={50}>
            <svg width="18" height="15" viewBox="0 0 18 15" fill="none" stroke="#c4c4c4" strokeWidth="2.2"><path d="M1 8l5 6L17 1" /></svg>
          </Slot>
          <Slot $w={38}><FxMark>fx</FxMark></Slot>
        </FxBox>
        <FormulaInput>{TITLE}</FormulaInput>
      </FormulaBar>

      <SheetGrid />
      <Timer>00:58</Timer>

      <SheetBar>
        <SheetTab $w={81}>Sheet1</SheetTab>
        <SheetTab $w={83}>Sheet3</SheetTab>
        <SheetTab $w={80} $active>Sheet2</SheetTab>
        <AddSheet>+</AddSheet>
        <Fill />
        <ScrollArea>
          <ScrollGrip>
            <svg width="4" height="14" viewBox="0 0 4 14" fill="#9a9a9a"><rect width="3" height="3" /><rect y="5" width="3" height="3" /><rect y="10" width="3" height="3" /></svg>
          </ScrollGrip>
          <ScrollArrow>
            <svg width="6" height="10" viewBox="0 0 6 10"><path d="M6 0v10L0 5z" fill="#666" /></svg>
          </ScrollArrow>
          <ScrollTrack />
        </ScrollArea>
      </SheetBar>

      <StatusBar>
        <Fill />
        <ViewBtn $active><ViewGrid /></ViewBtn>
        <ViewBtn><ViewPage /></ViewBtn>
        <ViewBtn><ViewBreak /></ViewBtn>
        <ZoomBar>
          <ZoomMinus />
          <ZoomLine $w={63} />
          <ZoomThumb />
          <ZoomLine />
        </ZoomBar>
      </StatusBar>

      <Taskbar>
        <StartClip>
          <svg width="14" height="14" viewBox="0 0 14 14" fill="none" stroke="#fff" strokeWidth="1.5"><circle cx="7" cy="7" r="5.5" /></svg>
        </StartClip>
        <TaskItem $w={60}>
          <TaskIcon>
            <svg width="20" height="20" viewBox="0 0 20 20" fill="none" stroke="#f2f2f2" strokeWidth="3"><circle cx="10" cy="10" r="8" /></svg>
          </TaskIcon>
          <TaskMark />
        </TaskItem>
        <TaskItem $w={60}>
          <TaskIcon>
            <svg width="20" height="20" viewBox="0 0 20 20" fill="none" stroke="#f2f2f2" strokeWidth="1.3"><path d="M0 1h12M0 19h12M1 5h10v10H1zM18 1v5M18 14v5" /><rect x="16" y="8" width="4" height="4" fill="#f2f2f2" stroke="none" /></svg>
          </TaskIcon>
          <TaskMark />
        </TaskItem>
        <TaskItem $w={62} $ml={2}><TaskIcon><FanIcon /></TaskIcon><TaskMark /></TaskItem>
        <TaskItem $ml={6}><TaskIcon><FolderIcon /></TaskIcon><TaskMark $on /></TaskItem>
        <TaskItem><TaskIcon><MailIcon /></TaskIcon><TaskMark /></TaskItem>
        <TaskItem><TaskIcon><PlayerIcon /></TaskIcon><TaskMark /></TaskItem>
        <TaskItem><TaskIcon><FlowerIcon /></TaskIcon><TaskMark /></TaskItem>
        <TaskItem><TaskIcon><EdgeIcon /></TaskIcon><TaskMark $on /></TaskItem>
        <TaskItem><TaskIcon><NeteaseIcon /></TaskIcon><TaskMark $on /></TaskItem>
        <TaskItem><TaskIcon><WordIcon /></TaskIcon><TaskMark $on /></TaskItem>
        <TaskItem $active><TaskIcon><ExcelIcon /></TaskIcon><TaskMark $on $full /></TaskItem>
        <Fill />
        <Tray>
          <TraySlot $w={38}>
            <svg width="28" height="20" viewBox="0 0 28 20"><path d="M7 20a6 6 0 0 1-1-12 8 8 0 0 1 15-2 7 7 0 0 1 1 14z" fill="#bfe0f5" /><path d="M2 15c6 4 17 4 24-1-1 4-3 6-6 6H7c-2 0-4-2-5-5z" fill="#8fc4e6" /></svg>
          </TraySlot>
          <TrayText $w={40} $ml={6}>29°C</TrayText>
          <TrayText $w={36} $ml={11}>多云</TrayText>
          <TraySlot $w={28} $ml={15}>
            <svg width="16" height="9" viewBox="0 0 16 9" fill="none" stroke="#eee" strokeWidth="1.3"><path d="M1 8l7-7 7 7" /></svg>
          </TraySlot>
          <TraySlot $w={30}>
            <svg width="14" height="20" viewBox="0 0 14 20"><rect x="3" y="0" width="8" height="14" rx="4" fill="#eee" /><path d="M1 10c0 4 3 6 6 6s6-2 6-6M7 16v3M3 19.5h8" fill="none" stroke="#eee" /></svg>
          </TraySlot>
          <TraySlot $w={31}>
            <svg width="21" height="20" viewBox="0 0 21 20" fill="none" stroke="#ddd" strokeWidth="1.2"><path d="M1 4l17-3v14H1zM11 6H8v6h3" /><circle cx="16" cy="15" r="4.5" fill="#e88a1a" stroke="none" /></svg>
          </TraySlot>
          <TraySlot $w={30}>
            <svg width="20" height="20" viewBox="0 0 20 20"><circle cx="10" cy="10" r="10" fill="#2f9a3a" /><path d="M2 6a10 10 0 0 1 16 0z" fill="#e8c814" /><path d="M10 5.5v9M5.5 10h9" stroke="#e8c814" strokeWidth="2.5" /></svg>
          </TraySlot>
          <TraySlot $w={30}>
            <svg width="20" height="12" viewBox="0 0 20 12" fill="none" stroke="#eee"><rect x="4.5" y="1.5" width="14" height="9" /><rect x="5" y="2" width="10" height="8" fill="#eee" stroke="none" /><path d="M0 2h4M2 0v4" /></svg>
          </TraySlot>
          <TraySlot $w={30}>
            <svg width="20" height="18" viewBox="0 0 20 18" fill="none" stroke="#ddd" strokeWidth="1.1"><path d="M1 6h3l4-4v14l-4-4H1zM11 6c1 2 1 4 0 6M14 4c2 3 2 7 0 10M17 2c3 4 3 10 0 14" /></svg>
          </TraySlot>
          <TrayText $w={28} $size={17} $center>中</TrayText>
          <Clock>20:58 周日<br />2021/8/8</Clock>
          <TraySlot $w={5} $ml={25}>
            <svg width="5" height="20" viewBox="0 0 5 20" fill="none" stroke="#eee"><path d="M.5.5h8v19h-8z" /></svg>
          </TraySlot>
        </Tray>
      </Taskbar>
    </Page>
  );
}
